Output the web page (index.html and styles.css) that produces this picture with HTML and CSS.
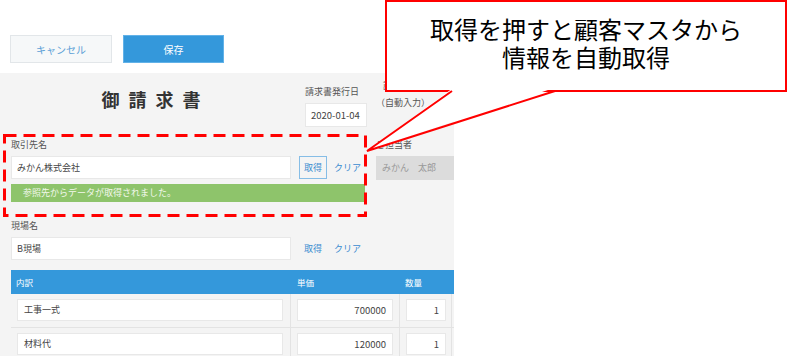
FILE: index.html
```html
<!DOCTYPE html>
<html lang="ja">
<head>
<meta charset="utf-8">
<title>御請求書</title>
<link rel="stylesheet" href="styles.css">
</head>
<body>
<div class="page">
  <div class="topbar">
    <button class="btn btn-cancel">キャンセル</button>
    <button class="btn btn-save">保存</button>
  </div>
  <div class="panel">
    <div class="head">
      <div class="title-col"><h1 class="title">御請求書</h1></div>
      <div class="date-col">
        <div class="label">請求書発行日</div>
        <div class="field date">2020-01-04</div>
      </div>
      <div class="auto-col">
        <div class="label hidden-label">請求番号</div>
        <div class="auto">（自動入力）</div>
      </div>
    </div>

    <div class="section customer">
      <div class="row labels">
        <div class="label">取引先名</div>
        <div></div>
        <div class="label">ご担当者</div>
      </div>
      <div class="row">
        <div class="field">みかん株式会社</div>
        <div class="actions">
          <span class="link boxed">取得</span>
          <span class="link">クリア</span>
        </div>
        <div class="field readonly">みかん　太郎</div>
      </div>
      <div class="alert">参照先からデータが取得されました。</div>
    </div>

    <div class="section site">
      <div class="row labels">
        <div class="label">現場名</div>
      </div>
      <div class="row">
        <div class="field">B現場</div>
        <div class="actions">
          <span class="link">取得</span>
          <span class="link">クリア</span>
        </div>
      </div>
    </div>

    <div class="items">
      <div class="trow thead">
        <div class="th">内訳</div>
        <div class="th">単価</div>
        <div class="th">数量</div>
        <div class="th"></div>
      </div>
      <div class="trow">
        <div class="td"><div class="field desc">工事一式</div></div>
        <div class="td"><div class="field num price">700000</div></div>
        <div class="td"><div class="field num qty">1</div></div>
        <div class="td"></div>
      </div>
      <div class="trow">
        <div class="td"><div class="field desc">材料代</div></div>
        <div class="td"><div class="field num price">120000</div></div>
        <div class="td"><div class="field num qty">1</div></div>
        <div class="td"></div>
      </div>
    </div>
  </div>

  <div class="callout">
    <div class="callout-line">取得を押すと顧客マスタから</div>
    <div class="callout-line">情報を自動取得</div>
  </div>
  <svg class="annot" width="787" height="356" viewBox="0 0 787 356">
    <rect x="4.5" y="135.5" width="361" height="80" fill="none" stroke="#ff0000" stroke-width="3" stroke-dasharray="12 7"/>
    <polygon points="453,88 368,150 554,88" fill="#ffffff"/>
    <polyline points="452,91 367,151 555,91" fill="none" stroke="#ff0000" stroke-width="2"/>
  </svg>
</div>
</body>
</html>
```

FILE: styles.css
```css
html, body {
  margin: 0;
  padding: 0;
  background: #ffffff;
}
body {
  font-family: "Noto Sans CJK JP", "Noto Sans", sans-serif;
  color: #555;
}
.page {
  position: relative;
  width: 787px;
  height: 356px;
  overflow: hidden;
}
.topbar {
  height: 73px;
  box-sizing: border-box;
  padding: 35px 0 0 10px;
  display: flex;
  align-items: flex-start;
  gap: 11px;
}
.btn {
  height: 28px;
  box-sizing: border-box;
  font-family: inherit;
  font-size: 10px;
  padding: 0;
  margin: 0;
}
.btn-cancel {
  width: 102px;
  background: #f6f8f9;
  border: 1px solid #e2e6e9;
  color: #5b9fd6;
}
.btn-save {
  width: 101px;
  background: #3498db;
  border: 1px solid #62b2e8;
  color: #fff;
}
.panel {
  width: 454px;
  height: 283px;
  box-sizing: border-box;
  padding-left: 11px;
  background: #f4f4f4;
  overflow: hidden;
  font-size: 9px;
}
.label {
  line-height: 12px;
  height: 12px;
  color: #555;
  white-space: nowrap;
}
.head {
  height: 61px;
  display: flex;
}
.title-col {
  width: 280px;
}
.title {
  margin: 14px 0 0;
  font-size: 18px;
  line-height: 24px;
  font-weight: 700;
  letter-spacing: 9px;
  text-indent: 9px;
  text-align: center;
  color: #333;
}
.date-col {
  width: 62px;
  margin-left: 14px;
}
.date-col .label {
  margin-top: 13px;
}
.field {
  height: 23px;
  line-height: 21px;
  box-sizing: border-box;
  background: #fff;
  border: 1px solid #e8e8e8;
  padding-left: 5px;
  color: #444;
  white-space: nowrap;
}
.date {
  margin-top: 5px;
  height: 24px;
  line-height: 22px;
  font-size: 9.5px;
}
.auto-col {
  width: 78px;
  margin-left: 9px;
}
.auto-col .label {
  margin-top: 7px;
}
.hidden-label {
  padding-left: 7px;
}
.auto {
  margin-top: 5px;
  line-height: 12px;
  color: #555;
  white-space: nowrap;
}
.section .labels {
  margin-bottom: 5px;
}
.customer {
  padding-top: 5px;
}
.row {
  display: grid;
  grid-template-columns: 280px 69px 78px;
  column-gap: 8px;
  align-items: start;
}
.actions {
  display: flex;
  align-items: center;
  gap: 6px;
  height: 23px;
}
.link {
  color: #3a8bd0;
  height: 23px;
  line-height: 21px;
  box-sizing: border-box;
  border: 1px solid transparent;
  padding: 0 4px;
  white-space: nowrap;
}
.link + .link {
  padding: 0;
}
.link.boxed {
  border-color: #86bde6;
}
.readonly {
  background: #dcdcdc;
  border-color: #dcdcdc;
  color: #999;
  height: 24px;
  line-height: 22px;
}
.alert {
  margin-top: 4px;
  width: 354px;
  height: 18px;
  line-height: 18px;
  background: #8ec46b;
  color: #f2f8ec;
  padding-left: 12px;
  box-sizing: border-box;
}
.site {
  padding-top: 18px;
}
.items {
  margin-top: 10px;
}
.trow {
  display: grid;
  grid-template-columns: 280px 109px 52px 60px;
}
.thead {
  background: #3498db;
  height: 24px;
}
.th {
  color: #fff;
  font-size: 8.5px;
  line-height: 24px;
  padding-left: 5px;
}
.th:nth-child(2) {
  padding-left: 6px;
}
.td {
  height: 34px;
  box-sizing: border-box;
  border-right: 1px solid #e3e3e3;
  border-bottom: 1px solid #e3e3e3;
  padding: 5px 0 0 6px;
}
.field.desc {
  width: 266px;
  height: 22px;
  line-height: 20px;
  padding-left: 6px;
}
.field.num {
  height: 22px;
  line-height: 20px;
  text-align: right;
  padding-right: 6px;
  font-size: 9.5px;
}
.field.price {
  width: 96px;
}
.field.qty {
  width: 40px;
}
.callout {
  position: absolute;
  left: 385px;
  top: 0;
  width: 402px;
  height: 92px;
  box-sizing: border-box;
  border: 2px solid #ff0000;
  background: #fff;
  color: #000;
  padding-top: 13px;
  text-align: center;
}
.callout-line {
  font-size: 24px;
  line-height: 28px;
  height: 28px;
  white-space: nowrap;
}
.annot {
  position: absolute;
  left: 0;
  top: 0;
  pointer-events: none;
}
```
